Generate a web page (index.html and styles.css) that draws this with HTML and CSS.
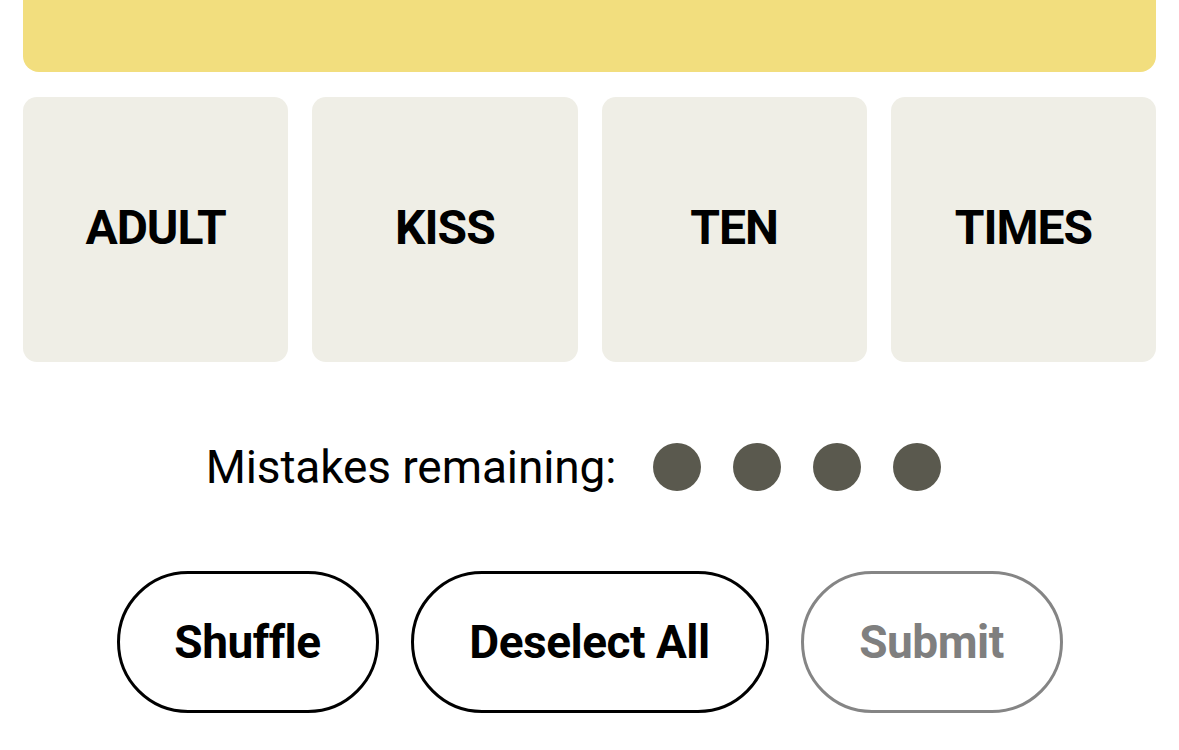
FILE: index.html
```html
<!DOCTYPE html>
<html>
<head>
<meta charset="utf-8">
<link rel="stylesheet" href="styles.css">
</head>
<body>
<div class="board">
  <div class="solved"></div>
  <div class="grid">
    <div class="tile">ADULT</div>
    <div class="tile">KISS</div>
    <div class="tile">TEN</div>
    <div class="tile">TIMES</div>
  </div>
  <div class="mistakes">
    <span class="label">Mistakes remaining:</span>
    <div class="dots">
      <span class="dot"></span><span class="dot"></span><span class="dot"></span><span class="dot"></span>
    </div>
  </div>
  <div class="actions">
    <button class="btn shuffle">Shuffle</button>
    <button class="btn deselect">Deselect All</button>
    <button class="btn submit" disabled>Submit</button>
  </div>
</div>
</body>
</html>
```
FILE: styles.css
```css
html, body {
  margin: 0;
  padding: 0;
  background: #ffffff;
}
body {
  font-family: Roboto, "Liberation Sans", sans-serif;
  color: #000;
}
.board {
  padding: 0 23px;
  display: flex;
  flex-direction: column;
}
.solved {
  height: 72px;
  background: #f2de7e;
  border-radius: 0 0 16px 16px;
}
.grid {
  margin-top: 25px;
  display: grid;
  grid-template-columns: repeat(4, 1fr);
  gap: 24px;
}
.tile {
  height: 265px;
  background: #efeee6;
  border-radius: 14px;
  display: flex;
  align-items: center;
  justify-content: center;
  font-weight: 700;
  font-size: 48px;
  letter-spacing: -1px;
  padding-bottom: 4px;
  box-sizing: border-box;
}
.mistakes {
  margin-top: 81px;
  height: 48px;
  display: flex;
  align-items: center;
  justify-content: center;
  gap: 37px;
  padding-right: 32px;
}
.label {
  font-size: 46px;
  font-weight: 400;
  letter-spacing: -0.1px;
}
.dots {
  display: flex;
  gap: 32px;
}
.dot {
  width: 48px;
  height: 48px;
  border-radius: 50%;
  background: #5a594e;
}
.actions {
  margin-top: 80px;
  display: flex;
  justify-content: center;
  gap: 32px;
}
.btn {
  height: 142px;
  border: 3px solid #000;
  border-radius: 71px;
  background: #fff;
  font-family: Roboto, "Liberation Sans", sans-serif;
  font-weight: 700;
  font-size: 46px;
  color: #000;
  padding: 0;
  letter-spacing: -0.5px;
}
.shuffle { width: 262px; }
.deselect { width: 358px; }
.submit {
  width: 262px;
  border-color: #858585;
  color: #7f7f7f;
}
```
